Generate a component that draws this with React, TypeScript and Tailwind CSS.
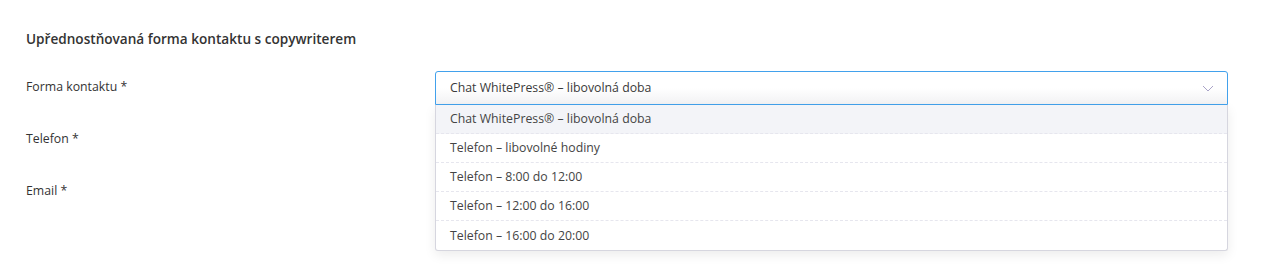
import React from "react";

const options = [
  "Chat WhitePress® – libovolná doba",
  "Telefon – libovolné hodiny",
  "Telefon – 8:00 do 12:00",
  "Telefon – 12:00 do 16:00",
  "Telefon – 16:00 do 20:00",
];

export default function App() {
  return (
    <div
      className="w-[1288px] h-[270px] bg-white text-[12.3px] text-[#333333] pl-[26px] pr-[60px] pt-[29px]"
      style={{ fontFamily: '"Open Sans", "Noto Sans", sans-serif' }}
    >
      <h2 className="font-semibold leading-[20px] text-[13.6px] text-[#333]">
        Upřednostňovaná forma kontaktu s copywriterem
      </h2>
      <div className="mt-[22px] flex flex-col gap-[18px]">
        <div className="flex items-start">
          <label className="w-[409px] shrink-0 pt-[6px] leading-[20px]">Forma kontaktu *</label>
          <div className="relative flex-1">
            <div className="h-[34px] flex items-center justify-between border border-[#42a1ec] rounded-t-[3px] bg-gradient-to-b from-white via-white to-[#f2f2f4] pl-[14px] pr-[12px]">
              <span className="leading-[20px] text-[#3a3a3a]">Chat WhitePress® – libovolná doba</span>
              <svg width="12" height="7" viewBox="0 0 12 7" fill="none" className="mr-[1px]">
                <path d="M1 1l5 5 5-5" stroke="#a9a3c8" strokeWidth="1" />
              </svg>
            </div>
            <div className="absolute left-0 right-0 top-full z-10 bg-white border border-t-0 border-[#d6d6df] rounded-b-[3px] shadow-[0_4px_12px_rgba(0,0,0,0.08)]">
              {options.map((o, i) => (
                <div
                  key={o}
                  className={
                    "h-[29px] flex items-center pl-[14px] leading-[20px] text-[#444] " +
                    (i === 0 ? "bg-[#f3f4f8] " : "") +
                    (i < options.length - 1 ? "border-b border-dashed border-[#e6e6ee]" : "")
                  }
                >
                  {o}
                </div>
              ))}
            </div>
          </div>
        </div>
        <div className="flex items-start h-[34px]">
          <label className="w-[409px] shrink-0 pt-[6px] leading-[20px]">Telefon *</label>
        </div>
        <div className="flex items-start h-[34px]">
          <label className="w-[409px] shrink-0 pt-[6px] leading-[20px]">Email *</label>
        </div>
      </div>
    </div>
  );
}
